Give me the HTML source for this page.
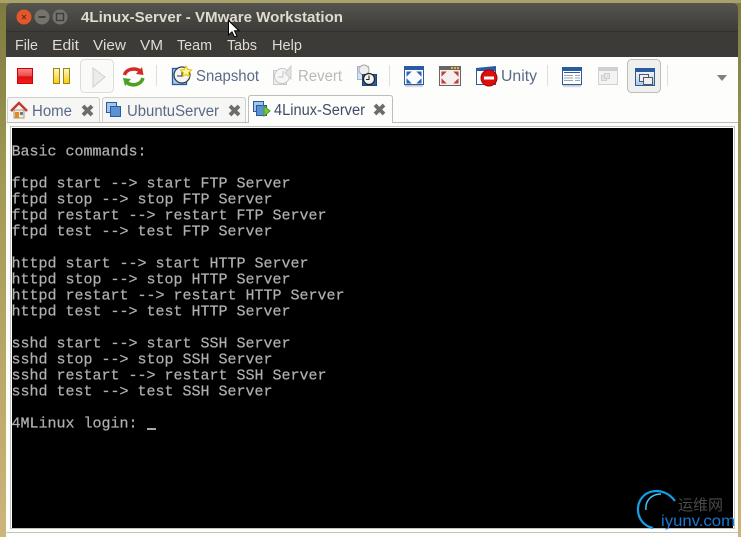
<!DOCTYPE html>
<html><head><meta charset="utf-8"><style>
html,body{margin:0;padding:0;width:741px;height:537px;overflow:hidden;background:#c9b37a}
svg{display:block}
text{font-family:"Liberation Sans",sans-serif}
.m{font-size:15px;fill:#dfdbd2}
.t{font-size:15.5px;fill:#5a6a86}
.d{font-size:15.5px;fill:#b9b9b9}
.c{font-family:"Liberation Mono",monospace;font-size:15px;font-weight:normal;fill:#b0b0b0;stroke:#a8a8a8;stroke-width:.25px;white-space:pre}
</style></head><body>
<svg width="741" height="537" viewBox="0 0 741 537" xmlns="http://www.w3.org/2000/svg">
<defs>
<linearGradient id="bg" x1="0" y1="0" x2="0" y2="1"><stop offset="0" stop-color="#7d7a3f"/><stop offset=".35" stop-color="#a39a56"/><stop offset="1" stop-color="#cdb47a"/></linearGradient>
<linearGradient id="tb" x1="0" y1="0" x2="0" y2="1"><stop offset="0" stop-color="#55544e"/><stop offset="1" stop-color="#3d3c38"/></linearGradient>
<linearGradient id="red" x1="0" y1="0" x2="0" y2="1"><stop offset="0" stop-color="#f58a8a"/><stop offset=".5" stop-color="#f04a4a"/><stop offset=".55" stop-color="#e01010"/><stop offset="1" stop-color="#f02020"/></linearGradient>
<linearGradient id="yel" x1="0" y1="0" x2="0" y2="1"><stop offset="0" stop-color="#fff5c0"/><stop offset="1" stop-color="#f5cf10"/></linearGradient>
<linearGradient id="blu" x1="0" y1="0" x2="0" y2="1"><stop offset="0" stop-color="#fff"/><stop offset="1" stop-color="#a9c8ea"/></linearGradient>
<linearGradient id="sh" x1="0" y1="0" x2="0" y2="1"><stop offset="0" stop-color="#bbb"/><stop offset="1" stop-color="#fff"/></linearGradient>
</defs>
<rect width="741" height="537" fill="url(#bg)"/>
<rect x="0" y="0" width="741" height="3" fill="#a9a06a"/>
<path d="M6 537V9Q6 3 12 3H732Q738 3 738 9V537Z" fill="#fdfdfc"/>
<path d="M6 57V9Q6 3 12 3H732Q738 3 738 9V57Z" fill="#3c3b37"/>
<path d="M6 31V9Q6 3 12 3H732Q738 3 738 9V31Z" fill="url(#tb)"/>
<rect x="6" y="31" width="732" height="1" fill="#33322e"/>
<circle cx="24" cy="17" r="7.5" fill="#e4572a"/><path d="M22 15l4 4M26 15l-4 4" stroke="#6d2a12" stroke-width="1"/>
<circle cx="42" cy="17" r="7.500" fill="#75736c"/><rect x="38.500" y="16" width="7" height="2" fill="#3f3e3a"/>
<circle cx="60" cy="17" r="7.500" fill="#75736c"/><rect x="56.500" y="13.500" width="7" height="7" fill="none" stroke="#3f3e3a" stroke-width="1.500"/>
<text x="81" y="22" font-size="14.500" font-weight="bold" fill="#dfdbd2" textLength="262" lengthAdjust="spacingAndGlyphs">4Linux-Server - VMware Workstation</text>
<text class="m" x="15" y="50" textLength="23" lengthAdjust="spacingAndGlyphs">File</text>
<text class="m" x="52" y="50" textLength="27" lengthAdjust="spacingAndGlyphs">Edit</text>
<text class="m" x="93" y="50" textLength="33" lengthAdjust="spacingAndGlyphs">View</text>
<text class="m" x="140" y="50" textLength="23" lengthAdjust="spacingAndGlyphs">VM</text>
<text class="m" x="177" y="50" textLength="35" lengthAdjust="spacingAndGlyphs">Team</text>
<text class="m" x="227" y="50" textLength="30" lengthAdjust="spacingAndGlyphs">Tabs</text>
<text class="m" x="272" y="50" textLength="30" lengthAdjust="spacingAndGlyphs">Help</text>

<!-- toolbar -->
<rect x="17.500" y="68.500" width="15" height="15" fill="url(#red)" stroke="#d40000"/>
<rect x="53.500" y="68.500" width="6" height="15" fill="url(#yel)" stroke="#9a8510"/>
<rect x="63.500" y="68.500" width="6" height="15" fill="url(#yel)" stroke="#9a8510"/>
<rect x="80.500" y="59.500" width="33" height="33" rx="4" fill="#fafaf9" stroke="#dcdcda"/>
<path d="M93 68L105 77L93 87Z" fill="#ececea" stroke="#cfcfcc"/>
<path d="M124.500 75C126 69 135 67 141 71.500" fill="none" stroke="#d42a22" stroke-width="3.500"/><path d="M143.500 75L136 74L142 67Z" fill="#d42a22"/>
<path d="M143 78C141 85 132 87 126 82" fill="none" stroke="#4da024" stroke-width="3.500"/><path d="M123 78L131 79L125 86Z" fill="#4da024"/>
<rect x="156" y="65" width="1" height="21" fill="#dedede"/>
<!-- snapshot -->
<rect x="172.500" y="68.500" width="14" height="16" fill="#a9c8ea" stroke="#2a5a9a" stroke-width="1.300"/>
<circle cx="182" cy="75" r="8" fill="#f4f4f2" stroke="#2b3a55" stroke-width="1.200"/>
<path d="M182 70V76H177" stroke="#333" fill="none"/>
<path d="M186 66l1.700 3.500 3.800.5-2.800 2.600.8 3.800-3.500-1.900-3.400 1.900.7-3.800-2.800-2.600 3.800-.5z" fill="#fff7a0" stroke="#e2c200"/>
<text x="196" y="81" font-size="15.500" fill="#5a6a86" textLength="63" lengthAdjust="spacingAndGlyphs">Snapshot</text>
<!-- revert -->
<rect x="273.500" y="70.500" width="13" height="14" fill="#eee" stroke="#c9c9c9"/>
<circle cx="282" cy="76" r="7.500" fill="#f6f6f6" stroke="#c4c4c4"/>
<path d="M283 71V77H278" stroke="#c4c4c4" fill="none"/>
<path d="M291 66V79L285 73Z" fill="#e2e2e2" stroke="#cdcdcd"/>
<text class="d" x="298" y="81" textLength="44" lengthAdjust="spacingAndGlyphs">Revert</text>
<!-- snapshot manager -->
<rect x="357.500" y="66.500" width="11" height="13" fill="#d9e4f2" stroke="#9db4d2"/>
<circle cx="364" cy="70" r="5" fill="#eee" stroke="#aaa"/>
<rect x="362.500" y="74.500" width="14" height="11" fill="#2a5fa8" stroke="#20467e"/>
<circle cx="369" cy="79" r="5.500" fill="#f4f4f2" stroke="#222" stroke-width="1.200"/>
<path d="M369 75.500V79.500H366" stroke="#222" fill="none"/>
<rect x="389" y="65" width="1" height="21" fill="#dedede"/>
<!-- fullscreen -->
<rect x="404.500" y="66.500" width="19" height="18" fill="#fafcff" stroke="#2a5a9f"/>
<rect x="404" y="66" width="20" height="4" fill="#2a5a9f"/>
<path d="M407 72h3.500l-3.500 3.500zM421 72h-3.500l3.500 3.500zM407 83h3.500l-3.500-3.500zM421 83h-3.500l3.500-3.500z" fill="#2a66b2" stroke="#2a66b2" stroke-width="1"/>
<rect x="405" y="85" width="18" height="3" fill="url(#sh)"/>
<!-- quick switch -->
<rect x="439.500" y="66.500" width="21" height="19" fill="#f5f0ee" stroke="#666"/>
<rect x="439" y="66" width="22" height="4" fill="#666"/>
<rect x="451" y="67" width="2" height="2" fill="#e9b030"/><rect x="454" y="67" width="2" height="2" fill="#e9b030"/><rect x="457" y="67" width="2" height="2" fill="#e9b030"/>
<path d="M442 72h3.500l-3.500 3.500zM458 72h-3.500l3.500 3.500zM442 83h3.500l-3.500-3.500zM458 83h-3.500l3.500-3.500z" fill="#c23a3a" stroke="#c23a3a"/>
<!-- unity -->
<rect x="476.500" y="68.500" width="19" height="16" fill="#fff" stroke="#2a5a9f"/>
<path d="M476 68L496 66V71H476Z" fill="#2a5a9f"/>
<circle cx="489" cy="78" r="8" fill="#e00d0d" stroke="#a80000"/>
<rect x="484" y="76.500" width="10" height="3" fill="#fff"/>
<text x="501" y="81" font-size="15.500" fill="#5a6a86" textLength="36" lengthAdjust="spacingAndGlyphs">Unity</text>
<rect x="547" y="65" width="1" height="21" fill="#dedede"/>
<!-- summary view -->
<rect x="562.500" y="67.500" width="19" height="17" fill="#fff" stroke="#2a5a9f"/>
<rect x="562" y="67" width="20" height="4" fill="#2a5a9f"/>
<path d="M564 72.500H580" stroke="#2a5a9f"/>
<path d="M564 75.500H573M575 75.500H580M564 78H573M575 78H580M564 80.500H573M575 80.500H580" stroke="#9aa6b8"/>
<rect x="563" y="85" width="18" height="3" fill="url(#sh)"/>
<!-- console grey -->
<rect x="598.500" y="67.500" width="19" height="17" fill="#f4f4f4" stroke="#d2d2d2"/>
<rect x="598" y="67" width="20" height="4" fill="#d0d0d0"/>
<rect x="601.500" y="75.500" width="5" height="5" fill="#e5e5e5" stroke="#cfcfcf"/><rect x="604.500" y="73.500" width="5" height="5" fill="#e5e5e5" stroke="#cfcfcf"/>
<!-- active -->
<rect x="627.500" y="59.500" width="33" height="33" rx="4" fill="#f0f0ee" stroke="#bcbcb9"/>
<rect x="635.500" y="68.500" width="19" height="17" fill="url(#blu)" stroke="#2a5a9f"/>
<rect x="635" y="68" width="20" height="4" fill="#2a5a9f"/>
<rect x="639.500" y="74.500" width="9" height="7" fill="#eef" stroke="#555"/>
<rect x="643.500" y="77.500" width="9" height="7" fill="#eee" stroke="#555"/>
<rect x="667" y="65" width="1" height="21" fill="#dedede"/>
<path d="M717 75H727L722 81Z" fill="#808080"/>

<!-- tabs -->
<path d="M6.500 122.500H738" stroke="#bdbdb9" fill="none"/>
<path d="M7.500 122V100Q7.500 97.500 10 97.500H97Q99.500 97.500 99.500 100V122" fill="#f6f6f4" stroke="#cfcfcb"/>
<path d="M102.500 122V100Q102.500 97.500 105 97.500H243Q245.500 97.500 245.500 100V122" fill="#f6f6f4" stroke="#cfcfcb"/>
<path d="M248.500 123V98Q248.500 95.500 251 95.500H390Q392.500 95.500 392.500 98V123" fill="#fdfdfc" stroke="#bdbdb9"/>
<rect x="249" y="122" width="143" height="2" fill="#fdfdfc"/>
<!-- home -->
<path d="M11 111L19 103L27 111" fill="none" stroke="#c03a30" stroke-width="2.500"/>
<path d="M14 110H24V118H14Z" fill="#f2ece0" stroke="#a89a80"/>
<rect x="15" y="112" width="4" height="6" fill="#e08a20"/>
<rect x="20" y="112" width="3" height="3" fill="#6a7a90"/>
<text class="t" x="32" y="116" textLength="40" lengthAdjust="spacingAndGlyphs">Home</text>
<path d="M83 106L92 115M92 106L83 115" stroke="#6c6c6c" stroke-width="3.800"/>
<!-- ubuntu icon -->
<rect x="106.500" y="102.500" width="10" height="10" fill="#a5c4e6" stroke="#2a5a9f"/>
<rect x="110.500" y="106.500" width="10" height="10" fill="#5b93d2" stroke="#2a5a9f"/>
<text class="t" x="127" y="116" textLength="92" lengthAdjust="spacingAndGlyphs">UbuntuServer</text>
<path d="M230 106L239 115M239 106L230 115" stroke="#6c6c6c" stroke-width="3.800"/>
<!-- active icon -->
<rect x="253.500" y="101.500" width="10" height="10" fill="#a5c4e6" stroke="#2a5a9f"/>
<rect x="256.500" y="105.500" width="10" height="10" fill="#5b93d2" stroke="#2a5a9f"/>
<path d="M264 106L270 111L264 116Z" fill="#7ac83a" stroke="#4f9a20"/>
<text x="274" y="115" font-size="15.500" fill="#3f4d63" textLength="91" lengthAdjust="spacingAndGlyphs">4Linux-Server</text>
<path d="M375 105L384 114M384 105L375 114" stroke="#6c6c6c" stroke-width="3.800"/>

<!-- console -->
<rect x="10.500" y="126.500" width="724" height="402" fill="#fff" stroke="#c2c2be"/>
<rect x="12" y="128" width="721" height="400" fill="#000"/>
<path d="M6.500 532.500H738" stroke="#c2c2be"/>
<text class="c" x="11.500" y="155.500">Basic commands:</text>
<text class="c" x="11.500" y="187.500">ftpd start --&gt; start FTP Server</text>
<text class="c" x="11.500" y="203.500">ftpd stop --&gt; stop FTP Server</text>
<text class="c" x="11.500" y="219.500">ftpd restart --&gt; restart FTP Server</text>
<text class="c" x="11.500" y="235.500">ftpd test --&gt; test FTP Server</text>
<text class="c" x="11.500" y="267.500">httpd start --&gt; start HTTP Server</text>
<text class="c" x="11.500" y="283.500">httpd stop --&gt; stop HTTP Server</text>
<text class="c" x="11.500" y="299.500">httpd restart --&gt; restart HTTP Server</text>
<text class="c" x="11.500" y="315.500">httpd test --&gt; test HTTP Server</text>
<text class="c" x="11.500" y="347.500">sshd start --&gt; start SSH Server</text>
<text class="c" x="11.500" y="363.500">sshd stop --&gt; stop SSH Server</text>
<text class="c" x="11.500" y="379.500">sshd restart --&gt; restart SSH Server</text>
<text class="c" x="11.500" y="395.500">sshd test --&gt; test SSH Server</text>
<text class="c" x="11.500" y="427.500">4MLinux login:</text>
<rect x="147" y="428" width="9" height="2" fill="#a8a8a8"/>

<!-- watermark -->
<path d="M653 528C634 524 633 498 650 492C660 489 669 493 675 501" fill="none" stroke="#12a0e8" stroke-width="2.200"/>
<path d="M646 510C645 500 652 494 661 494" fill="none" stroke="#4fc0f5" stroke-width="1.500"/>
<text x="678" y="510" font-size="15" fill="#4a4a4a" style="font-family:'Liberation Sans','Noto Sans CJK SC',sans-serif">运维网</text>
<text x="661" y="526" font-size="15.500" fill="#1878cf" textLength="74" lengthAdjust="spacingAndGlyphs">iyunv.com</text>

<!-- cursor -->
<path d="M228.500 20.500V35L232 31.800L234.500 37L237 36L234.500 30.800H239Z" fill="#fff" stroke="#000"/>
</svg>
</body></html>
